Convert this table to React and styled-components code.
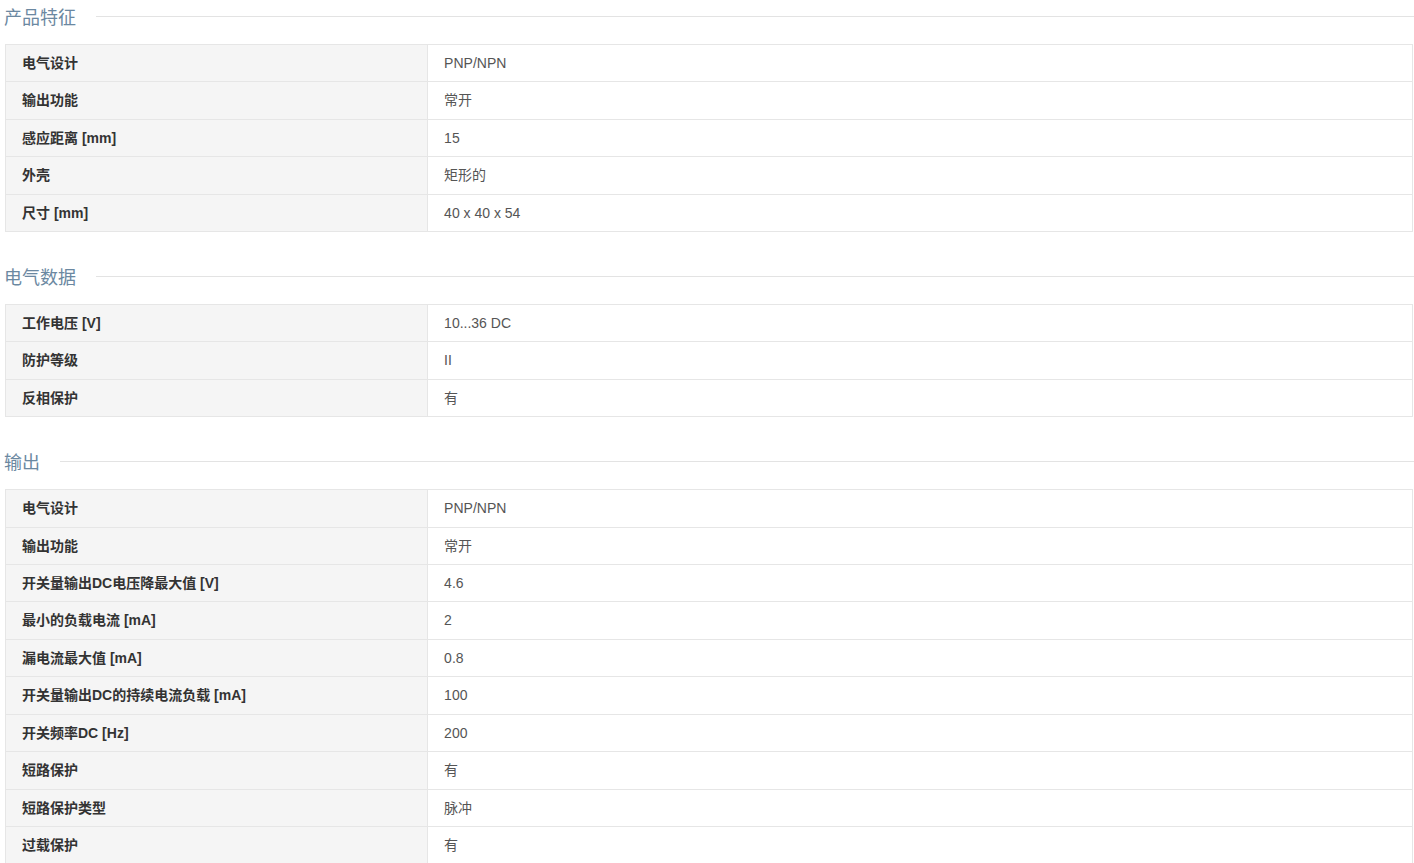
import React from "react";
import styled, { createGlobalStyle } from "styled-components";

const GlobalStyle = createGlobalStyle`
  html, body {
    margin: 0;
    padding: 0;
    background: #fff;
  }
  body {
    font-family: "Liberation Sans", Arial, "Noto Sans CJK SC", sans-serif;
    font-size: 14px;
    color: #333;
  }
`;

const sections = [
  {
    title: "产品特征",
    rows: [
      ["电气设计", "PNP/NPN"],
      ["输出功能", "常开"],
      ["感应距离 [mm]", "15"],
      ["外壳", "矩形的"],
      ["尺寸 [mm]", "40 x 40 x 54"],
    ],
  },
  {
    title: "电气数据",
    rows: [
      ["工作电压 [V]", "10...36 DC"],
      ["防护等级", "II"],
      ["反相保护", "有"],
    ],
  },
  {
    title: "输出",
    rows: [
      ["电气设计", "PNP/NPN"],
      ["输出功能", "常开"],
      ["开关量输出DC电压降最大值 [V]", "4.6"],
      ["最小的负载电流 [mA]", "2"],
      ["漏电流最大值 [mA]", "0.8"],
      ["开关量输出DC的持续电流负载 [mA]", "100"],
      ["开关频率DC [Hz]", "200"],
      ["短路保护", "有"],
      ["短路保护类型", "脉冲"],
      ["过载保护", "有"],
    ],
  },
];

const Page = styled.div`
  padding: 4px 1px 0 4px;
`;

const Section = styled.section`
  margin-bottom: 32px;
`;

const HeadingRow = styled.div`
  display: flex;
  align-items: center;
  gap: 20px;
  height: 24px;
  margin-bottom: 16px;
  margin-right: -1px;
`;

const HeadingText = styled.h3`
  margin: 0;
  font-size: 18px;
  font-weight: normal;
  color: #6b88a1;
  white-space: nowrap;
`;

const HeadingLine = styled.div`
  flex: 1;
  height: 1px;
  background: #e3e3e3;
`;

const Table = styled.table`
  width: calc(100% - 1px);
  margin-left: 1px;
  border-collapse: collapse;
  table-layout: fixed;
  border: 1px solid #e6e6e6;
`;

const Row = styled.tr`
  border-bottom: 1px solid #e6e6e6;
`;

const Label = styled.th`
  box-sizing: border-box;
  width: 30%;
  padding: 8px 16px;
  line-height: 20.4px;
  text-align: left;
  font-weight: bold;
  color: #333;
  background: #f5f5f5;
  border-right: 1px solid #e6e6e6;
`;

const Value = styled.td`
  padding: 8px 16px;
  line-height: 20.4px;
  color: #555;
  background: #fff;
`;

export default function App() {
  return (
    <Page>
      <GlobalStyle />
      {sections.map((s) => (
        <Section key={s.title}>
          <HeadingRow>
            <HeadingText>{s.title}</HeadingText>
            <HeadingLine />
          </HeadingRow>
          <Table>
            <tbody>
              {s.rows.map(([k, v], i) => (
                <Row key={i}>
                  <Label>{k}</Label>
                  <Value>{v}</Value>
                </Row>
              ))}
            </tbody>
          </Table>
        </Section>
      ))}
    </Page>
  );
}
